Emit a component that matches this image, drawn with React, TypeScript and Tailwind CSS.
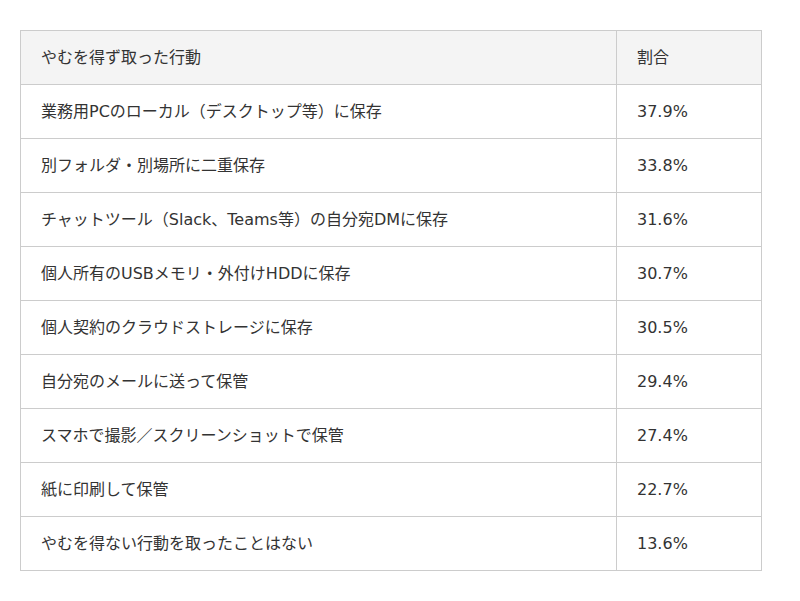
const rows = [
  { action: "業務用PCのローカル（デスクトップ等）に保存", rate: "37.9%" },
  { action: "別フォルダ・別場所に二重保存", rate: "33.8%" },
  { action: "チャットツール（Slack、Teams等）の自分宛DMに保存", rate: "31.6%" },
  { action: "個人所有のUSBメモリ・外付けHDDに保存", rate: "30.7%" },
  { action: "個人契約のクラウドストレージに保存", rate: "30.5%" },
  { action: "自分宛のメールに送って保管", rate: "29.4%" },
  { action: "スマホで撮影／スクリーンショットで保管", rate: "27.4%" },
  { action: "紙に印刷して保管", rate: "22.7%" },
  { action: "やむを得ない行動を取ったことはない", rate: "13.6%" },
];

export default function App() {
  return (
    <div
      className="bg-white px-5 pt-[30px] pb-[30px] text-[#333]"
      style={{ fontFamily: '"DejaVu Sans", "Noto Sans CJK JP", sans-serif' }}
    >
      <table className="w-[742px] border-collapse border border-[#ddd] text-[16px]">
        <thead>
          <tr className="h-[54px] bg-[#f4f4f4]">
            <th className="border border-[#ccc] px-5 text-left font-normal">やむを得ず取った行動</th>
            <th className="w-[145px] border border-[#ccc] px-5 text-left font-normal">割合</th>
          </tr>
        </thead>
        <tbody>
          {rows.map((r) => (
            <tr key={r.action} className="h-[54px]">
              <td className="border border-[#ccc] px-5">{r.action}</td>
              <td className="border border-[#ccc] px-5">{r.rate}</td>
            </tr>
          ))}
        </tbody>
      </table>
    </div>
  );
}
